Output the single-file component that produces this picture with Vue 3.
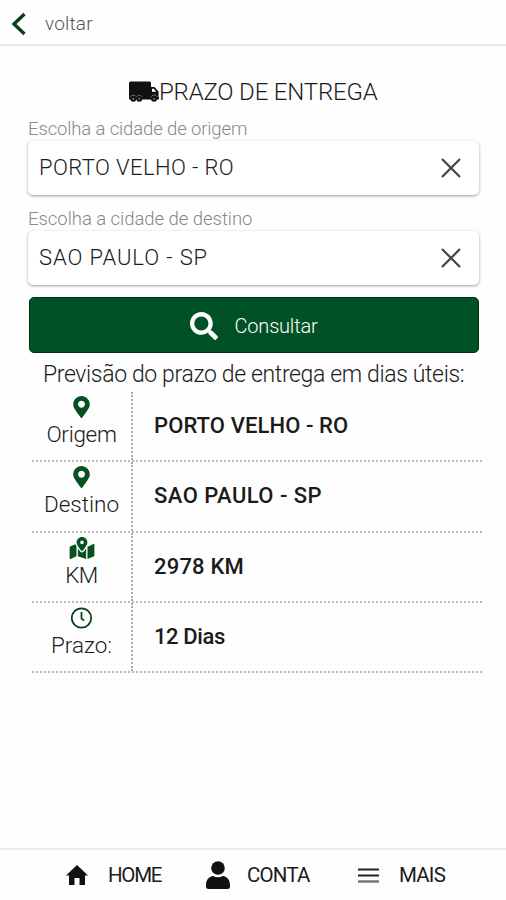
<script setup>
const fields = [
  { label: 'Escolha a cidade de origem', value: 'PORTO VELHO - RO', cls: 'origin' },
  { label: 'Escolha a cidade de destino', value: 'SAO PAULO - SP', cls: 'dest' },
]
const rows = [
  { icon: 'pin', label: 'Origem', value: 'PORTO VELHO - RO', cls: 'r-origin' },
  { icon: 'pin', label: 'Destino', value: 'SAO PAULO - SP', cls: 'r-dest' },
  { icon: 'map', label: 'KM', value: '2978 KM', cls: 'r-km' },
  { icon: 'clock', label: 'Prazo:', value: '12 Dias', cls: 'r-days' },
]
</script>

<template>
  <div class="screen">
    <header class="topbar">
      <svg class="back" viewBox="0 0 16 24"><path d="M13.500 2 3 12l10.500 10" /></svg>
      <span>voltar</span>
    </header>

    <main class="content">
      <h1 class="title">
        <svg class="truck" viewBox="0 0 30 22">
          <path d="M1.500 0.500H20.500a1.500 1.500 0 0 1 1.500 1.500V6H25.500L29.500 10.500v5.500h.5v2.500H1a1 1 0 0 1-1-1V2A1.500 1.500 0 0 1 1.500 0.500Z" />
          <path d="M23 7.800h1.800l2.400 3h-4.200z" fill="#fff" />
          <path d="M1.200 16.200a3.400 3.400 0 0 1 6.200 0 3.400 3.400 0 0 1 6 0M21.800 16.200a3.400 3.400 0 0 1 6.400 0" fill="none" stroke="#bbb" stroke-width="0.600" />
          <circle cx="4.300" cy="17.800" r="3" /><circle cx="10.300" cy="17.800" r="3" /><circle cx="25" cy="17.800" r="3" />
          <g fill="#999"><circle cx="4.300" cy="17.800" r="0.900" /><circle cx="10.300" cy="17.800" r="0.900" /><circle cx="25" cy="17.800" r="0.900" /></g>
        </svg>
        <span>PRAZO DE ENTREGA</span>
      </h1>

      <section v-for="f in fields" :key="f.label" class="field" :class="f.cls">
        <label>{{ f.label }}</label>
        <div class="input">
          <span>{{ f.value }}</span>
          <svg viewBox="0 0 20 20"><path d="M1 1 19 19M19 1 1 19" /></svg>
        </div>
      </section>

      <button class="submit">
        <svg viewBox="0 0 512 512"><path d="M505 442.700 405.300 343c-4.500-4.500-10.600-7-17-7H372c27.600-35.300 44-79.700 44-128C416 93.100 322.900 0 208 0S0 93.100 0 208s93.100 208 208 208c48.300 0 92.700-16.400 128-44v16.300c0 6.400 2.500 12.500 7 17l99.700 99.700c9.400 9.400 24.600 9.400 33.900 0l28.300-28.300c9.400-9.400 9.400-24.600.1-34zM208 336c-70.700 0-128-57.200-128-128 0-70.700 57.200-128 128-128 70.700 0 128 57.200 128 128 0 70.700-57.200 128-128 128z" /></svg>
        <span>Consultar</span>
      </button>

      <p class="forecast">Previsão do prazo de entrega em dias úteis:</p>

      <div class="table">
        <div v-for="r in rows" :key="r.label" class="row" :class="r.cls">
          <div class="key">
            <svg v-if="r.icon === 'pin'" class="pin" viewBox="0 0 384 512"><path d="M172.300 501.700C27 291 0 269.400 0 192 0 86 86 0 192 0s192 86 192 192c0 77.400-27 99-172.300 309.700-9.500 13.800-29.900 13.800-39.400 0zM192 272c44.200 0 80-35.800 80-80s-35.800-80-80-80-80 35.800-80 80 35.800 80 80 80z" /></svg>
            <svg v-else-if="r.icon === 'map'" class="map" viewBox="0 0 576 512"><path d="M288 0c-69.600 0-126 56.400-126 126 0 56.300 82.400 158.800 113.900 196a15.800 15.800 0 0 0 24.200 0C331.600 284.800 414 182.300 414 126 414 56.400 357.600 0 288 0zm0 168a42 42 0 1 1 0-84 42 42 0 0 1 0 84zM20.100 216A32 32 0 0 0 0 245.700v250.300c0 11.300 11.400 19.100 21.900 14.900L160 448V214.900a302 302 0 0 1-21.300-46.300zM288 359.700a47.800 47.800 0 0 1-36.600-17A763 763 0 0 1 192 266.500V448l192 64V266.500a762 762 0 0 1-59.400 76.200 47.800 47.800 0 0 1-36.600 17zm266.100-198.600L416 224v288l139.900-56A32 32 0 0 0 576 426.300V176a16 16 0 0 0-21.900-14.900z" /></svg>
            <svg v-else class="clock" viewBox="0 0 24 24"><circle cx="12" cy="12" r="10.600" /><path d="M12 5.500v7l3 2.300" /></svg>
            <span>{{ r.label }}</span>
          </div>
          <div class="val">{{ r.value }}</div>
        </div>
      </div>
    </main>

    <nav class="tabs">
      <a class="home">
        <svg viewBox="0 0 22 20"><path d="M11 0 22 10.500h-3V20h-5.500v-7h-5v7H3v-9.500H0z" /></svg><span>HOME</span>
      </a>
      <a class="account">
        <svg viewBox="0 0 24 28"><circle cx="12" cy="7" r="6.800" /><path d="M0 24c0-5 3-8.500 7-9 3 1.700 7 1.700 10 0 4 .5 7 4 7 9v1.500a2.500 2.500 0 0 1-2.500 2.500h-19A2.500 2.500 0 0 1 0 25.500z" /></svg><span>CONTA</span>
      </a>
      <a class="more">
        <svg viewBox="0 0 21 15"><path d="M0 1.500h21M0 7.500h21" stroke="#222" stroke-width="1.800" /><path d="M0 13.500h21" stroke="#777" stroke-width="2.500" /></svg><span>MAIS</span>
      </a>
    </nav>
  </div>
</template>

<style>
body {
  margin: 0;
  background: #fefefe;
}
</style>

<style scoped>
* {
  box-sizing: border-box;
}
.screen {
  height: 900px;
  display: flex;
  flex-direction: column;
  font-family: Roboto, "Liberation Sans", sans-serif;
  font-weight: 300;
  color: #1b1b1b;
  white-space: nowrap;
}
svg {
  display: block;
  flex: none;
}
.topbar {
  height: 46px;
  border-bottom: 2px solid #e8e8e8;
  display: flex;
  align-items: center;
  padding: 3px 0 0 11px;
  font-size: 19px;
  letter-spacing: 0.2px;
  color: #555;
}
.back {
  width: 16px;
  height: 24px;
  margin-right: 18px;
  fill: none;
  stroke: #073f16;
  stroke-width: 3.4;
}
.content {
  flex: 1;
  padding: 32px 24px 0 28px;
}
.title {
  margin: 0 0 12px 101px;
  height: 28px;
  display: flex;
  align-items: center;
  font-size: 24px;
  font-weight: 300;
  letter-spacing: -0.18px;
}
.truck {
  width: 30px;
  height: 22px;
  fill: #111;
}
.field {
  width: 451px;
  height: 90px;
}
.field label {
  display: block;
  height: 23px;
  line-height: 23px;
  font-size: 18.500px;
  letter-spacing: -0.13px;
  color: #888;
}
.dest label {
  letter-spacing: -0.04px;
}
.input {
  height: 54px;
  border-radius: 5px;
  background: #fff;
  box-shadow: 0 1px 3px rgba(0, 0, 0, 0.38);
  display: flex;
  align-items: center;
  justify-content: space-between;
  padding: 0 18px 2px 11px;
  font-size: 22px;
  letter-spacing: 0.4px;
}
.dest .input {
  letter-spacing: 0.9px;
}
.input svg {
  width: 20px;
  height: 20px;
  margin-top: 2px;
  fill: none;
  stroke: #444;
  stroke-width: 2.2;
}
.submit {
  display: flex;
  align-items: center;
  justify-content: center;
  width: 450px;
  height: 56px;
  margin: -1px 0 0 0.5px;
  padding: 1px 0 0;
  border: 1px solid #042e12;
  border-radius: 5px;
  background: #005226;
  color: #fff;
  font: inherit;
  font-size: 20px;
  letter-spacing: -0.2px;
}
.submit svg {
  width: 28px;
  height: 28px;
  margin-right: 17px;
  fill: #fff;
}
.forecast {
  margin: 8px 0 0 15px;
  height: 28px;
  line-height: 28px;
  font-size: 23px;
  letter-spacing: -0.36px;
}
.table {
  margin: 3px 0 0 4px;
  width: 450px;
}
.row {
  display: flex;
  height: 70.300px;
  border-bottom: 2px dotted #bbb;
}
.key {
  width: 101px;
  border-right: 2px dotted #aaa;
  display: flex;
  flex-direction: column;
  align-items: center;
  font-size: 22.500px;
  line-height: 30px;
}
.r-origin .key {
  letter-spacing: -0.3px;
}
.r-km .key {
  letter-spacing: -0.5px;
}
.key svg {
  height: 22px;
  margin: 4px 0 1px;
  fill: #07501f;
}
.pin {
  width: 17px;
}
.map {
  width: 26px;
}
.key .clock {
  width: 23px;
  fill: none;
  stroke: #07401b;
  stroke-width: 1.900;
}
.val {
  padding: 0 0 0 21px;
  line-height: 67px;
  font-size: 22px;
  font-weight: 500;
  letter-spacing: 0.1px;
}
.r-dest .val {
  letter-spacing: 0.45px;
}
.r-km .val {
  letter-spacing: 0.2px;
}
.r-days .val {
  letter-spacing: -0.4px;
}
.tabs {
  height: 52px;
  border-top: 2px solid #ececec;
  display: flex;
  padding-left: 66px;
  font-size: 20.500px;
  font-weight: 400;
  letter-spacing: -0.8px;
}
.tabs a {
  display: flex;
  align-items: center;
}
.tabs svg {
  fill: #111;
}
.home {
  width: 140px;
}
.tabs .home {
  letter-spacing: -1.3px;
}
.home svg {
  width: 22px;
  height: 20px;
  margin-right: 20px;
}
.account {
  width: 152px;
}
.account svg {
  width: 24px;
  height: 28px;
  margin-right: 17px;
}
.more svg {
  width: 21px;
  height: 15px;
  margin-right: 20px;
}
</style>
